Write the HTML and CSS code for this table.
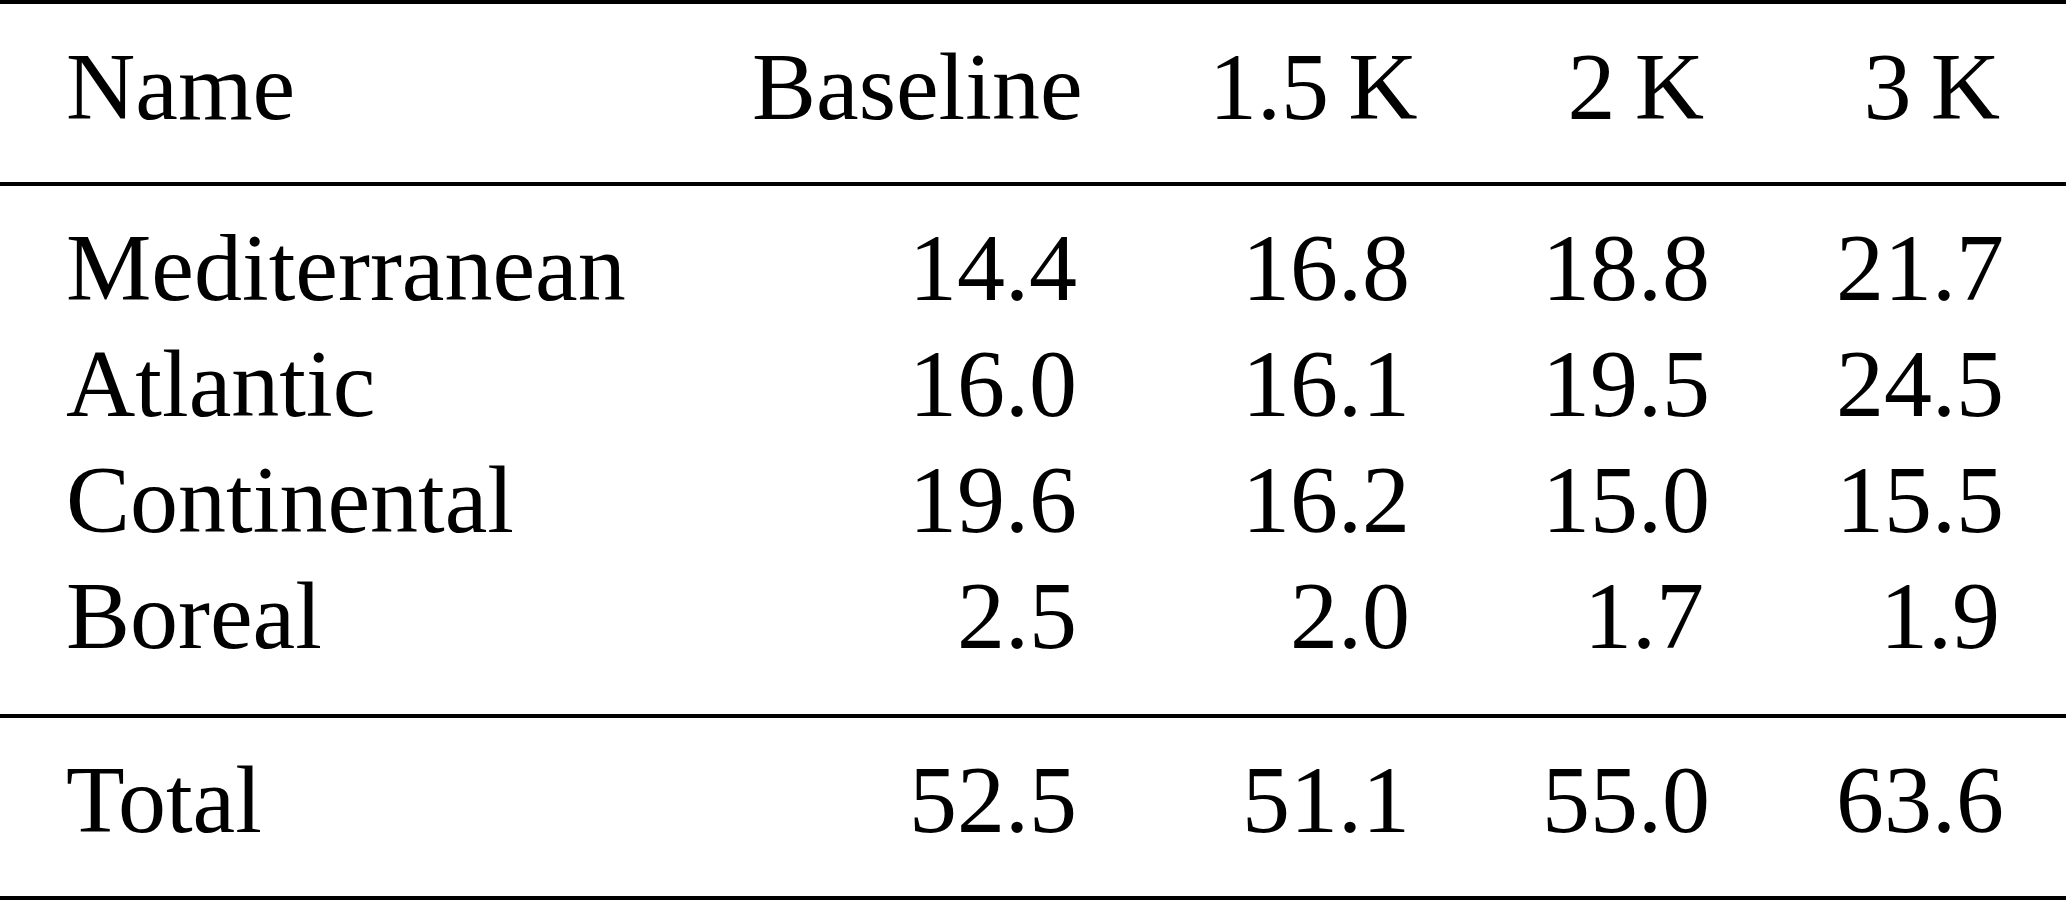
FILE: index.html
```html
<!DOCTYPE html>
<html>
<head>
<meta charset="utf-8">
<link rel="stylesheet" href="styles.css">
</head>
<body>
<table class="tab">
  <colgroup>
    <col class="c-name">
    <col class="c-base">
    <col class="c-k15">
    <col class="c-k2">
    <col class="c-k3">
  </colgroup>
  <thead>
    <tr class="head">
      <th class="l">Name</th>
      <th>Baseline</th>
      <th>1.5&thinsp;K</th>
      <th>2&thinsp;K</th>
      <th>3&thinsp;K</th>
    </tr>
  </thead>
  <tbody class="body">
    <tr class="first">
      <td class="l">Mediterranean</td><td>14.4</td><td>16.8</td><td>18.8</td><td>21.7</td>
    </tr>
    <tr>
      <td class="l">Atlantic</td><td>16.0</td><td>16.1</td><td>19.5</td><td>24.5</td>
    </tr>
    <tr>
      <td class="l">Continental</td><td>19.6</td><td>16.2</td><td>15.0</td><td>15.5</td>
    </tr>
    <tr class="last">
      <td class="l">Boreal</td><td>2.5</td><td>2.0</td><td>1.7</td><td>1.9</td>
    </tr>
  </tbody>
  <tfoot>
    <tr class="total">
      <td class="l">Total</td><td>52.5</td><td>51.1</td><td>55.0</td><td>63.6</td>
    </tr>
  </tfoot>
</table>
</body>
</html>
```
FILE: styles.css
```css
html, body {
  margin: 0;
  padding: 0;
  background: #ffffff;
}

.tab {
  border-collapse: collapse;
  table-layout: fixed;
  width: 2066px;
  font-family: "Liberation Serif", "Times New Roman", serif;
  font-size: 96px;
  line-height: 116px;
  color: #000000;
  border-top: 4px solid #000000;
  border-bottom: 4px solid #000000;
}

.c-name { width: 686px; }
.c-base { width: 457px; }
.c-k15 { width: 333px; }
.c-k2 { width: 294px; }
.c-k3 { width: 296px; }

.tab th,
.tab td {
  padding: 0 66px;
  text-align: right;
  font-weight: normal;
  white-space: nowrap;
}

.tab .l {
  text-align: left;
}

.head th {
  padding-top: 25px;
  padding-bottom: 37px;
  border-bottom: 4px solid #000000;
}

.first td {
  padding-top: 24px;
}

.last td {
  padding-bottom: 40px;
  border-bottom: 4px solid #000000;
}

.total td {
  padding-top: 24px;
  padding-bottom: 38px;
}
```
